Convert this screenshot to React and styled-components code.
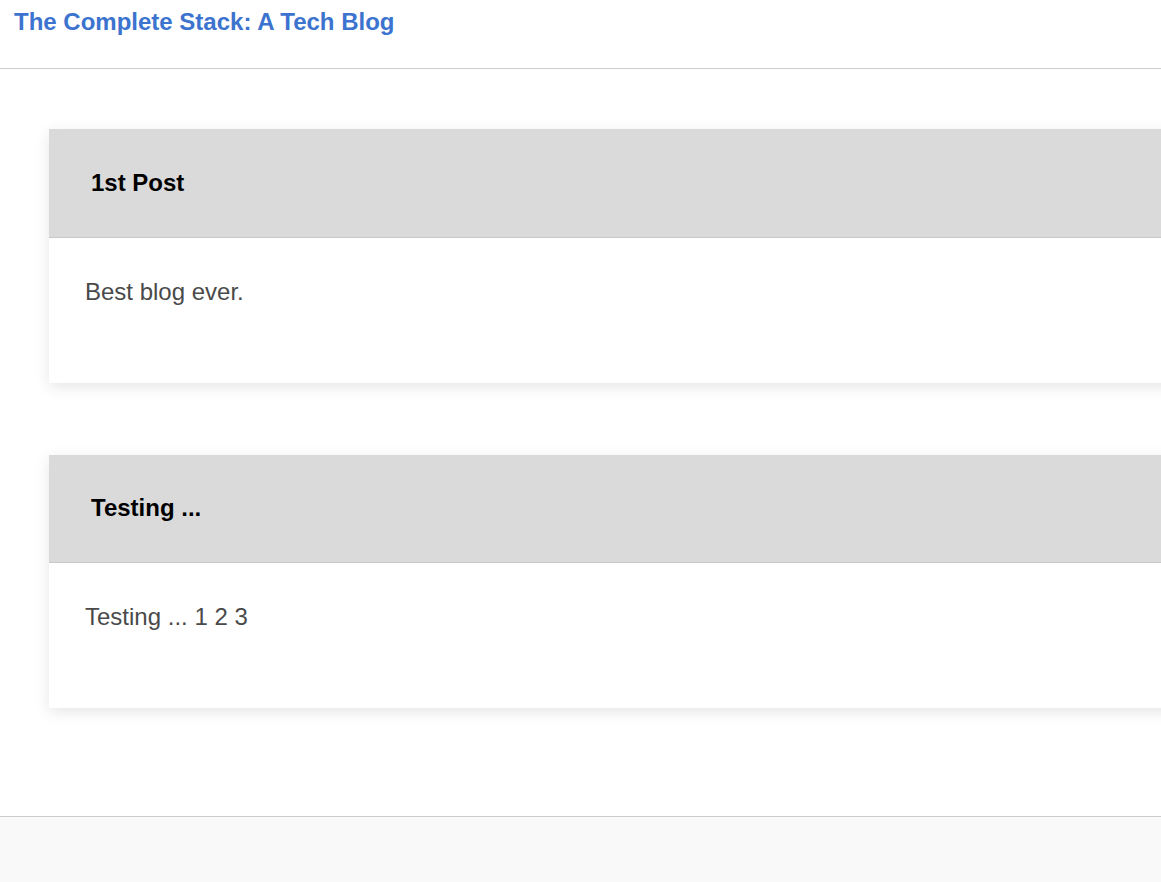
import React from 'react';
import styled, { createGlobalStyle } from 'styled-components';

const GlobalStyle = createGlobalStyle`
  html, body {
    margin: 0;
    padding: 0;
    background: #fff;
    overflow-x: hidden;
  }

  body {
    font-family: "Liberation Sans", Arial, sans-serif;
  }
`;

const Page = styled.div`
  display: flex;
  flex-direction: column;
  min-height: 100vh;
`;

const Header = styled.header`
  box-sizing: border-box;
  height: 69px;
  padding: 8px 14px 0;
  border-bottom: 1px solid #cccccc;
`;

const Brand = styled.h1`
  margin: 0;
  color: #3b73cf;
  font-size: 24px;
  font-weight: bold;
  line-height: 28px;
`;

const Main = styled.main`
  display: flex;
  flex-direction: column;
  gap: 72px;
  padding: 60px 0 108px 49px;
`;

const Card = styled.article`
  width: 1161px;
  background: #fff;
  box-shadow: 0 4px 14px rgba(0, 0, 0, 0.1);
`;

const CardHeader = styled.div`
  box-sizing: border-box;
  display: flex;
  align-items: center;
  height: 108.5px;
  padding-left: 42px;
  background: #dadada;
  border-bottom: 1px solid #c8c8c8;
`;

const CardTitle = styled.h2`
  margin: 0;
  color: #000;
  font-size: 24px;
  font-weight: bold;
`;

const CardBody = styled.div`
  box-sizing: border-box;
  height: 145px;
  padding: 40px 36px 0;
`;

const CardText = styled.p`
  margin: 0;
  color: #4a4a4a;
  font-size: 24px;
`;

const Footer = styled.footer`
  flex: 1;
  min-height: 66px;
  background: #f9f9f9;
  border-top: 1px solid #cccccc;
`;

const posts = [
  { id: 1, title: '1st Post', body: 'Best blog ever.' },
  { id: 2, title: 'Testing ...', body: 'Testing ... 1 2 3' },
];

export default function App() {
  return (
    <Page>
      <GlobalStyle />
      <Header>
        <Brand>The Complete Stack: A Tech Blog</Brand>
      </Header>
      <Main>
        {posts.map((post) => (
          <Card key={post.id}>
            <CardHeader>
              <CardTitle>{post.title}</CardTitle>
            </CardHeader>
            <CardBody>
              <CardText>{post.body}</CardText>
            </CardBody>
          </Card>
        ))}
      </Main>
      <Footer />
    </Page>
  );
}
